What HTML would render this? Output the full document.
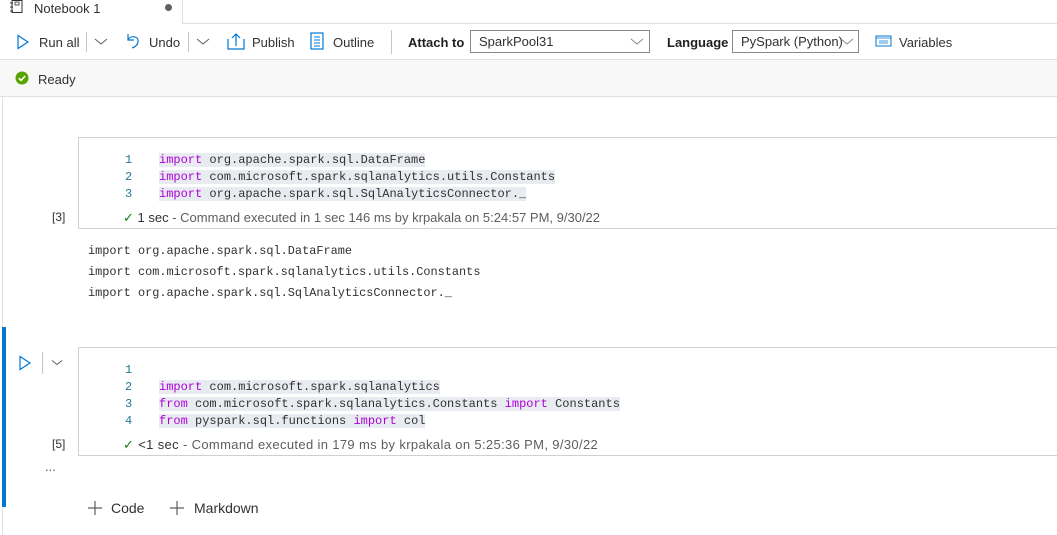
<!DOCTYPE html>
<html><head><meta charset="utf-8"><style>
*{margin:0;padding:0;box-sizing:border-box}
body{width:1057px;height:535px;overflow:hidden;background:#fff;font-family:"Liberation Sans",sans-serif;font-size:13px;color:#323130;position:relative}
.a{position:absolute;white-space:nowrap}
.m{font-family:"Liberation Mono",monospace;font-size:12px}
.k{color:#af00db}
.hl{background:#e8ebf0}
.n{color:#237893}
.g{color:#605e5c}
</style></head><body>
<div class="a" style="left:0;top:0;width:183px;height:24px;border-right:1px solid #e1dfdd;background:#fff"></div>
<div class="a" style="left:183px;top:23px;width:874px;height:1px;background:#e1dfdd"></div>
<svg class="a" style="left:9px;top:0" width="16" height="14"><rect x="3" y="0.5" width="10" height="12" fill="none" stroke="#323130"/><rect x="6" y="2" width="4" height="3" fill="none" stroke="#323130" stroke-width=".8"/><path d="M1 3h3M1 7h3M1 11h3" stroke="#323130"/></svg>
<div class="a" style="left:34px;top:1px;font-size:13px">Notebook 1</div>
<div class="a" style="left:165px;top:4px;width:7px;height:7px;border-radius:50%;background:#605e5c"></div>
<svg class="a" style="left:16px;top:34px" width="14" height="16"><path d="M2 1.5L12 8L2 14.5Z" fill="none" stroke="#0078d4" stroke-width="1.2"/></svg>
<div class="a" style="left:39px;top:35px">Run all</div>
<div class="a" style="left:86px;top:32px;width:1px;height:20px;background:#c8c6c4"></div>
<svg class="a" style="left:94px;top:37px" width="14" height="10"><path d="M1 2l6 5 6-5" fill="none" stroke="#605e5c"/></svg>
<svg class="a" style="left:124px;top:32px" width="18" height="18"><path d="M4 2v6h6M4 7.5C7 3 15 4 14 10c-.5 3-3 5-6 6" fill="none" stroke="#0078d4" stroke-width="1.2"/></svg>
<div class="a" style="left:149px;top:35px">Undo</div>
<div class="a" style="left:188px;top:32px;width:1px;height:20px;background:#c8c6c4"></div>
<svg class="a" style="left:196px;top:37px" width="14" height="10"><path d="M1 2l6 5 6-5" fill="none" stroke="#605e5c"/></svg>
<svg class="a" style="left:227px;top:32px" width="18" height="18"><path d="M1 7v10h16V7M9 14V2M5 6l4-4 4 4" fill="none" stroke="#0078d4" stroke-width="1.2"/></svg>
<div class="a" style="left:252px;top:35px">Publish</div>
<svg class="a" style="left:310px;top:32px" width="14" height="18"><rect x="1" y="1" width="12" height="16" fill="none" stroke="#0078d4" stroke-width="1.2"/><path d="M4 5h6M4 8h6M4 11h6M4 14h6" stroke="#0078d4"/></svg>
<div class="a" style="left:333px;top:35px">Outline</div>
<div class="a" style="left:391px;top:30px;width:1px;height:24px;background:#c8c6c4"></div>
<div class="a" style="left:408px;top:35px;font-weight:600;color:#201f1e">Attach to</div>
<div class="a" style="left:470px;top:30px;width:180px;height:23px;border:1px solid #8a8886"></div>
<div class="a" style="left:479px;top:34px">SparkPool31</div>
<svg class="a" style="left:630px;top:37px" width="14" height="10"><path d="M1 2l6 5 6-5" fill="none" stroke="#8a8886"/></svg>
<div class="a" style="left:667px;top:35px;font-weight:600;color:#201f1e">Language</div>
<div class="a" style="left:732px;top:30px;width:127px;height:23px;border:1px solid #8a8886"></div>
<div class="a" style="left:741px;top:34px">PySpark (Python)</div>
<svg class="a" style="left:840px;top:37px" width="14" height="10"><path d="M1 2l6 5 6-5" fill="none" stroke="#8a8886"/></svg>
<svg class="a" style="left:875px;top:35px" width="17" height="13"><rect x="1" y="1" width="15" height="10" fill="none" stroke="#0078d4"/><path d="M1 3h15M4 6h9M4 8h9" stroke="#0078d4" stroke-width=".8"/></svg>
<div class="a" style="left:899px;top:35px">Variables</div>
<div class="a" style="left:0;top:59px;width:1057px;height:38px;background:#f8f8f8;border-top:1px solid #e1dfdd;border-bottom:1px solid #e1dfdd"></div>
<svg class="a" style="left:15px;top:71px" width="14" height="14"><circle cx="7" cy="7" r="6.5" fill="#57a300"/><path d="M3.8 7.2l2.2 2.2 4.2-4.4" fill="none" stroke="#fff" stroke-width="1.6"/></svg>
<div class="a" style="left:38px;top:72px">Ready</div>
<div class="a" style="left:2px;top:97px;width:1px;height:438px;background:#e1dfdd"></div>
<div class="a" style="left:78px;top:137px;width:990px;height:92px;border:1px solid #d2d0ce"></div>
<div class="a m n" style="left:125px;top:152px;line-height:17px">1<br>2<br>3</div>
<div class="a m" style="left:159px;top:152px;line-height:17px"><span class="hl"><span class="k">import</span> org.apache.spark.sql.DataFrame </span><br><span class="hl"><span class="k">import</span> com.microsoft.spark.sqlanalytics.utils.Constants </span><br><span class="hl"><span class="k">import</span> org.apache.spark.sql.SqlAnalyticsConnector._</span></div>
<div class="a" style="left:52px;top:210px;font-size:12px">[3]</div>
<div class="a g" style="left:123px;top:210px;font-size:13px"><span style="color:#107c10">✓</span> <span style="color:#323130">1 sec</span> - Command executed in 1 sec 146 ms by krpakala on 5:24:57 PM, 9/30/22</div>
<div class="a m" style="left:88px;top:241px;line-height:21px;color:#323130;font-size:11.9px">import org.apache.spark.sql.DataFrame<br>import com.microsoft.spark.sqlanalytics.utils.Constants<br>import org.apache.spark.sql.SqlAnalyticsConnector._</div>
<div class="a" style="left:2px;top:327px;width:4px;height:180px;background:#0078d4"></div>
<svg class="a" style="left:18px;top:355px" width="14" height="16"><path d="M2 1.5L12 8L2 14.5Z" fill="none" stroke="#0078d4" stroke-width="1.2"/></svg>
<div class="a" style="left:42px;top:352px;width:1px;height:22px;background:#c8c6c4"></div>
<svg class="a" style="left:51px;top:359px" width="12" height="8"><path d="M1 1.5l5 4 5-4" fill="none" stroke="#605e5c"/></svg>
<div class="a" style="left:78px;top:347px;width:990px;height:109px;border:1px solid #d2d0ce"></div>
<div class="a m n" style="left:125px;top:362px;line-height:17px">1<br>2<br>3<br>4</div>
<div class="a m" style="left:159px;top:362px;line-height:17px"><br><span class="hl"><span class="k">import</span> com.microsoft.spark.sqlanalytics </span><br><span class="hl"><span class="k">from</span> com.microsoft.spark.sqlanalytics.Constants <span class="k">import</span> Constants </span><br><span class="hl"><span class="k">from</span> pyspark.sql.functions <span class="k">import</span> col</span></div>
<div class="a" style="left:52px;top:437px;font-size:12px">[5]</div>
<div class="a g" style="left:123px;top:437px;font-size:13px;letter-spacing:0.35px"><span style="color:#107c10">✓</span> <span style="color:#323130">&lt;1 sec</span> - Command executed in 179 ms by krpakala on 5:25:36 PM, 9/30/22</div>
<div class="a" style="left:45px;top:459px;font-size:13px;color:#605e5c">...</div>
<svg class="a" style="left:87px;top:500px" width="16" height="16"><path d="M8 1v14M1 8h14" stroke="#605e5c" stroke-width="1.2"/></svg>
<div class="a" style="left:111px;top:500px;font-size:14px">Code</div>
<svg class="a" style="left:169px;top:500px" width="16" height="16"><path d="M8 1v14M1 8h14" stroke="#605e5c" stroke-width="1.2"/></svg>
<div class="a" style="left:194px;top:500px;font-size:14px">Markdown</div>
</body></html>
